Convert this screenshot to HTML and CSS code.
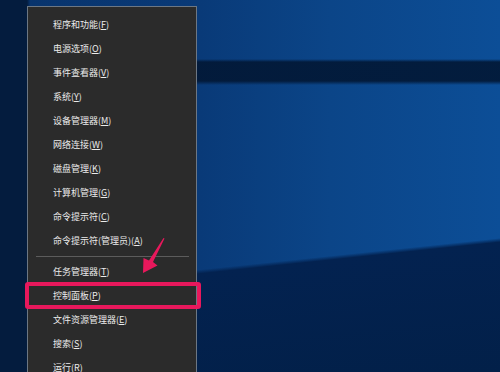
FILE: index.html
```html
<!DOCTYPE html>
<html lang="zh-CN">
<head>
<meta charset="utf-8">
<title>Win+X 菜单</title>
<link rel="stylesheet" href="styles.css">
</head>
<body>
<div class="desktop">
  <div class="menu">
    <ul class="group">
      <li>程序和功能(<u>F</u>)</li>
      <li>电源选项(<u>O</u>)</li>
      <li>事件查看器(<u>V</u>)</li>
      <li>系统(<u>Y</u>)</li>
      <li>设备管理器(<u>M</u>)</li>
      <li>网络连接(<u>W</u>)</li>
      <li>磁盘管理(<u>K</u>)</li>
      <li>计算机管理(<u>G</u>)</li>
      <li>命令提示符(<u>C</u>)</li>
      <li>命令提示符(管理员)(<u>A</u>)</li>
    </ul>
    <div class="sep"></div>
    <ul class="group">
      <li>任务管理器(<u>T</u>)</li>
      <li class="marked">控制面板(<u>P</u>)</li>
      <li>文件资源管理器(<u>E</u>)</li>
      <li>搜索(<u>S</u>)</li>
      <li>运行(<u>R</u>)</li>
    </ul>
  </div>
  <svg class="arrow" width="40" height="45" viewBox="0 0 40 45" aria-hidden="true">
    <path d="M23.5 0 L24.5 0.5 L13 24 L17.5 27.5 L3 35 L3.5 20 L9 22.5 Z" fill="#e8185c"/>
  </svg>
</div>
</body>
</html>
```

FILE: styles.css
```css
html, body {
  margin: 0;
  padding: 0;
}

body {
  background: #041a3a;
}

.desktop {
  position: relative;
  width: 500px;
  height: 372px;
  overflow: hidden;
  box-sizing: border-box;
  padding: 6px 0 0 27px;
  background:
    linear-gradient(to right, #041c3e 0, #041c3e 27px, rgba(4, 28, 62, 0) 30px),
    linear-gradient(to bottom, transparent 59px, rgba(2, 24, 54, 0.92) 62px, rgba(2, 24, 54, 0.92) 81px, transparent 85px),
    linear-gradient(174deg, transparent 289px, #032250 293px, #022049 100%),
    linear-gradient(to right, #08336b 0, #093a78 200px, #0b4588 330px, #0c4e97 500px);
  font-family: "Noto Sans CJK SC", "Noto Sans", sans-serif;
}

.menu {
  width: 170px;
  box-sizing: border-box;
  background: #2b2b2b;
  border: 1px solid #6c7784;
  padding: 6px 0 8px;
}

.group {
  list-style: none;
  margin: 0;
  padding: 0;
}

.group li {
  height: 24px;
  line-height: 24px;
  padding-left: 25px;
  font-size: 9px;
  color: #ececec;
  white-space: nowrap;
}

.group li u {
  text-underline-offset: 1px;
}

.sep {
  height: 1px;
  margin: 3px 7px 3px 8px;
  background: #5c5c5c;
}

.marked {
  position: relative;
}

.marked::after {
  content: "";
  position: absolute;
  left: -3px;
  right: -5px;
  top: -2px;
  bottom: -1px;
  border: 4px solid #e8185c;
  border-radius: 3px;
}

.arrow {
  position: absolute;
  left: 140px;
  top: 238px;
}
```
